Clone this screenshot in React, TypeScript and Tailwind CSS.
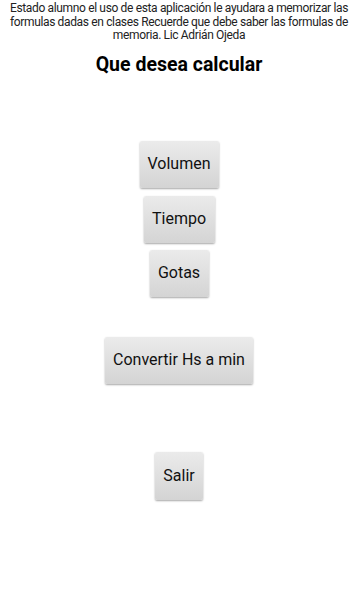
import React from 'react';

const buttonClass =
  'flex items-center justify-center h-[47px] rounded-[2px] bg-gradient-to-b from-[#ebebeb] to-[#d4d4d4] text-[16px] text-[#111] shadow-[0_1px_2px_rgba(0,0,0,0.35)]';

const App: React.FC = () => {
  return (
    <div className="min-h-screen bg-white font-['Roboto',sans-serif] flex flex-col items-center">
      {/* Intro text */}
      <p className="px-[8px] pt-[2px] text-center text-[12px] tracking-[-0.35px] leading-[13.5px] text-[#222]">
        Estado alumno el uso de esta aplicación le ayudara a memorizar las formulas dadas en clases Recuerde que debe saber las formulas de memoria. Lic Adrián Ojeda
      </p>

      <h1 className="mt-[9px] text-[19.5px] font-bold text-black leading-[26px]">Que desea calcular</h1>

      <div className="mt-[63px] flex flex-col items-center">
        <button className={`${buttonClass} w-[79px]`}>Volumen</button>
        <button className={`${buttonClass} w-[71px] mt-[8px]`}>Tiempo</button>
        <button className={`${buttonClass} w-[59px] mt-[7px]`}>Gotas</button>
        <button className={`${buttonClass} w-[148px] mt-[40px]`}>Convertir Hs a min</button>
        <button className={`${buttonClass} w-[48px] mt-[68px] h-[48px]`}>Salir</button>
      </div>
    </div>
  );
};

export default App;
